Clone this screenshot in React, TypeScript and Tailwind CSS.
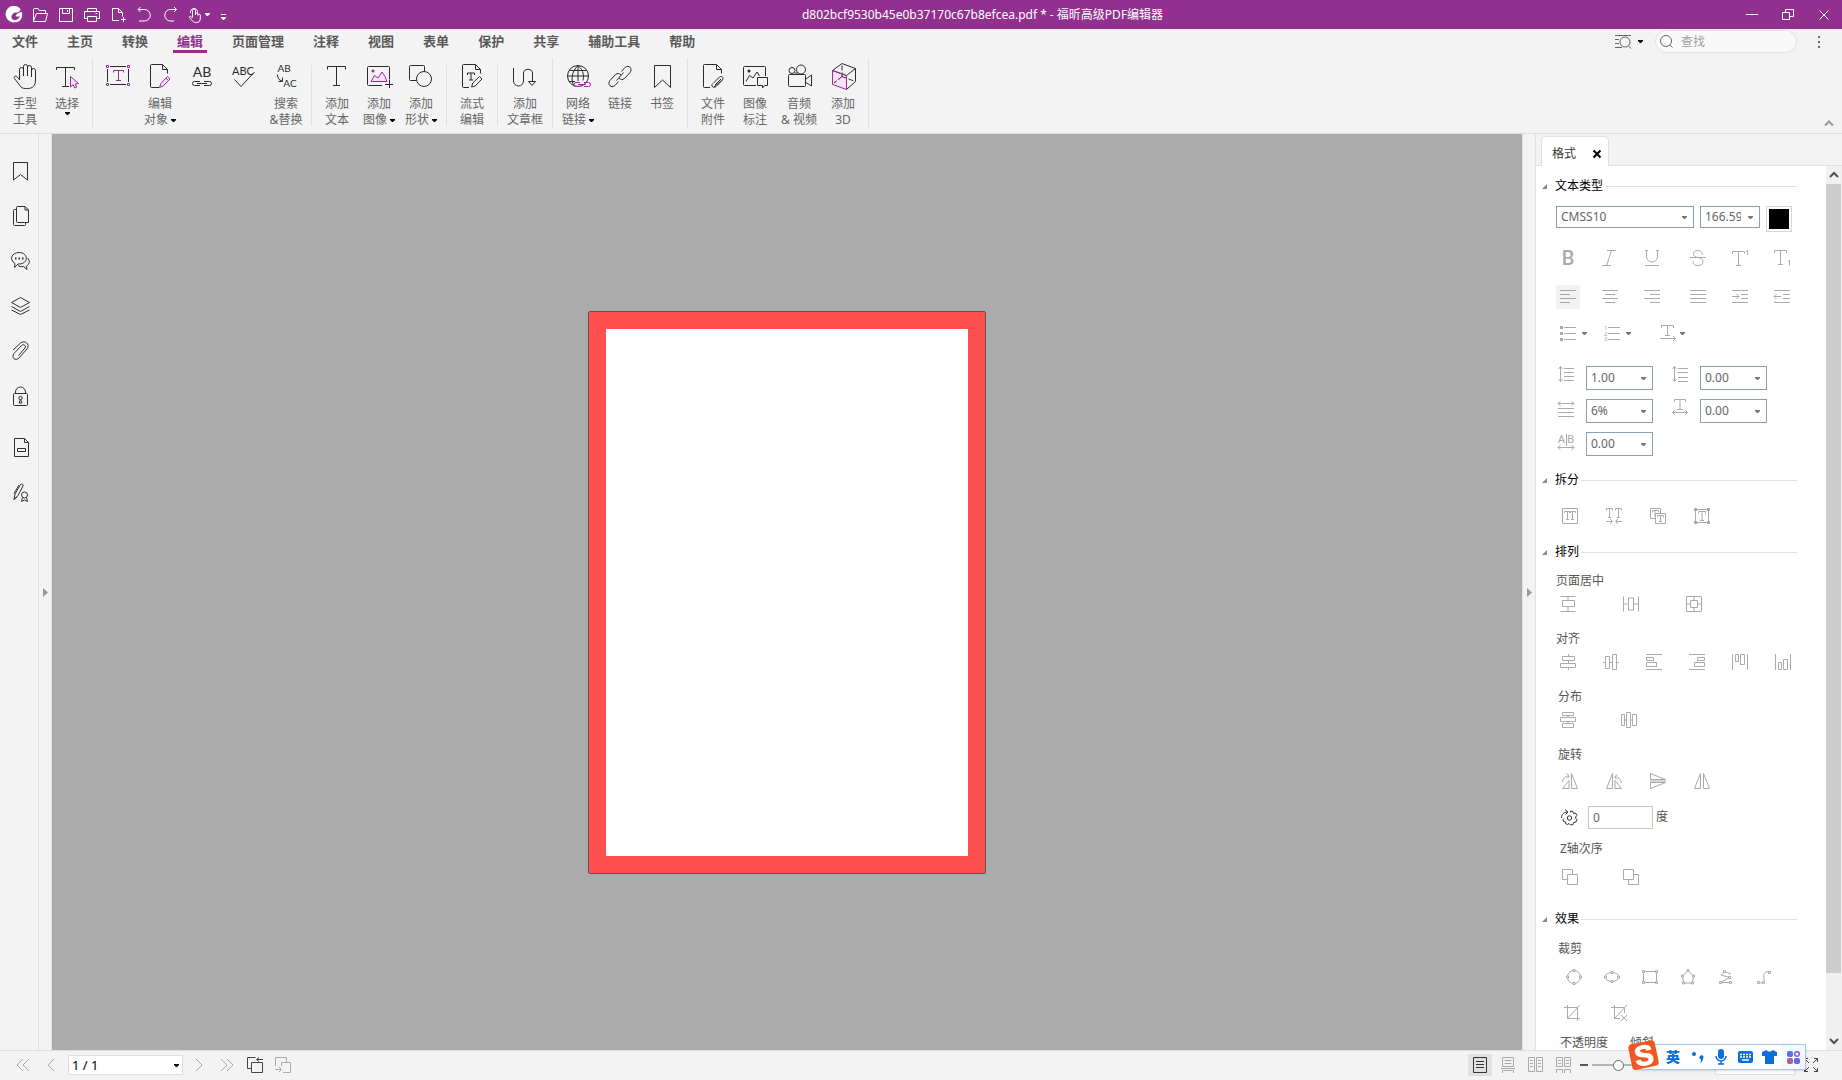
import React from 'react';

type Kids = { children?: React.ReactNode };

function Svg({ w = 16, h = 16, children, sw = 1 }: Kids & { w?: number; h?: number; sw?: number }) {
  return (
    <svg width={w} height={h} viewBox={`0 0 ${w} ${h}`} fill="none" stroke="currentColor" strokeWidth={sw} className="shrink-0 overflow-visible" aria-hidden="true">
      {children}
    </svg>
  );
}

const P = ({ d, w = 16, h = 16, sw = 1 }: { d: string; w?: number; h?: number; sw?: number }) => (
  <Svg w={w} h={h} sw={sw}>
    <path d={d} />
  </Svg>
);

const Caret = () => (
  <svg width="5" height="3" viewBox="0 0 5 3" fill="currentColor" className="shrink-0" aria-hidden="true">
    <path d="M0 0h5v1L3 3H2L0 1z" />
  </svg>
);

const PURPLE = '#923090';
const PINK = '#fbe0fb';

/* ---------- ribbon icons, 28 x 28 ---------- */

const R = ({ children }: Kids) => <Svg w={28} h={28}>{children}</Svg>;
const PageOutline = () => <path d="M11 24.5H5.5a1 1 0 0 1-1-1v-21a1 1 0 0 1 1-1h12l5 5v4M17.5 1.5v5h5" />;

const icons = {
  hand: (
    <R>
      <path d="M8.5 17V6.5a2 2 0 0 1 4 0V13M12.500 13V3.500a2 2 0 0 1 4 0V13M16.500 13V4.500a2 2 0 0 1 4 0V14M20.500 14V7.500a2 2 0 0 1 4 0V17c0 6-3 8.500-8 8.500h-2c-3 0-4.500-1-6-3.500l-5-6.500c-1.200-2 1-3.200 2.600-1.800l2.400 3" />
    </R>
  ),
  select: (
    <R>
      <path d="M3.500 7V4.500h18V7M12.500 4.500v19M9 23.500h7" />
      <path d="M17.500 13.500l8 7-3.300.6 1.500 3-2 .9-1.500-3.200-2.700 2z" fill={PINK} stroke={PURPLE} />
    </R>
  ),
  textBox: (
    <R>
      <path d="M6 3.500h16M6 21.500h16M3.500 6v13M24.500 6v13" />
      <path d="M2.500 2.500h2v2h-2zM23.500 2.500h2v2h-2zM2.500 20.500h2v2h-2zM23.500 20.500h2v2h-2zM9.500 9.500v-2h10v2M14.500 7.500v10M12 17.500h5" stroke={PURPLE} />
    </R>
  ),
  editObject: (
    <R>
      <path d="M13 24.500H5.500a1 1 0 0 1-1-1v-21a1 1 0 0 1 1-1h11l5 5v4M16.500 1.500v5h5" />
      <path d="M13.500 24.500l1.300-4 6.700-7 2.500 2.500-6.800 7zM20 15.200l2.500 2.500" fill={PINK} stroke={PURPLE} />
    </R>
  ),
  ab: (
    <R>
      <text x="14" y="14" textAnchor="middle" fontSize="14" fill="currentColor" stroke="none" fontFamily="Lato">AB</text>
      <path d="M12 18.500H6.500a2 2 0 0 0 0 4H12M16 18.500h5.500a2 2 0 0 1 0 4H16M9 20.500h10" />
    </R>
  ),
  abc: (
    <R>
      <text x="13" y="12" textAnchor="middle" fontSize="11" fill="currentColor" stroke="none" fontFamily="Lato">ABC</text>
      <path d="M4.500 16.500l6.500 7L24.500 9" />
    </R>
  ),
  replace: (
    <R>
      <text x="12" y="9" textAnchor="middle" fontSize="10" fill="currentColor" stroke="none" fontFamily="Lato">AB</text>
      <text x="18" y="24" textAnchor="middle" fontSize="10" fill="currentColor" stroke="none" fontFamily="Lato">AC</text>
      <path d="M5.500 11.500c0 4 1.500 5.500 4.500 6.500M10.500 14.500v4h-4" />
    </R>
  ),
  addText: (
    <R>
      <path d="M4.500 6.500v-3h18v3M13.500 3.500v19M10 22.500h7" />
    </R>
  ),
  addImage: (
    <R>
      <path d="M17 22.500H3.500a1 1 0 0 1-1-1v-17a1 1 0 0 1 1-1h20a1 1 0 0 1 1 1v12M24.500 17v8M20 21.500h8" />
      <path d="M6 18.500l3.500-6 3.500 2.500 4-6 3 4.500 2 5z" fill={PINK} stroke={PURPLE} />
      <circle cx="8" cy="8" r="1.500" fill={PURPLE} stroke="none" />
    </R>
  ),
  addShape: (
    <R>
      <path d="M9.500 17.500H3.500a1 1 0 0 1-1-1v-13a1 1 0 0 1 1-1h13a1 1 0 0 1 1 1V8" />
      <circle cx="17" cy="16" r="7.500" />
    </R>
  ),
  flowEdit: (
    <R>
      <PageOutline />
      <path d="M9.500 12v-2h7v2M13 10v7M11 17h4M13.500 24l1.300-4 6.700-6.500 2.500 2.500-6.800 7z" />
    </R>
  ),
  article: (
    <R>
      <path d="M2.500 5v13a5 5 0 0 0 10 0V9a5 5 0 0 1 9 0v9M17.500 18.500h7l-3.500 4z" />
    </R>
  ),
  webLink: (
    <R>
      <circle cx="14" cy="13" r="10.500" />
      <path d="M14 2.500C7 9 7 18 10 22.500M14 2.500c6 5 6 11 5 15M14 2.500V18M5.500 7.500h17M3.500 13h21M5 18.500h6" />
      <path d="M16 19.500h-4a2 2 0 0 0 0 4h4M20 19.500h4.500a2 2 0 0 1 0 4H20M14 21.500h8" stroke={PURPLE} />
    </R>
  ),
  link: (
    <R>
      <path d="M15.500 8.500l3.500-4c4-3.500 8 1.500 5 5l-5.500 6c-2 1.500-4 1.300-5.500-.5M12.500 18.500l-3.500 4c-4 3.500-8-1.500-5-5l5.500-6c2-1.500 4-1.300 5.500.5M10.500 17.500l7-8" />
    </R>
  ),
  bookmark: (
    <R>
      <path d="M6.500 2.500h16v22l-8-7.500-8 7.500z" />
    </R>
  ),
  fileAttach: (
    <R>
      <PageOutline />
      <path d="M14.500 20l6-6c2-1.500 4.500.5 3 3l-6.500 6.500c-2.500 2-5.500-.5-3.500-3M16 22l6-6M15 24l7.500-6.500" />
    </R>
  ),
  imageNote: (
    <R>
      <path d="M15 22.500H3.500a1 1 0 0 1-1-1v-17a1 1 0 0 1 1-1h20a1 1 0 0 1 1 1V13M5 18.500l3.500-6 3.500 2.500 4-6 2.500 4M16.500 14.500h10v8h-3l-2 2.500v-2.500h-5z" />
      <circle cx="8" cy="8" r="1.500" fill="currentColor" stroke="none" />
    </R>
  ),
  media: (
    <R>
      <rect x="3.500" y="11.500" width="17" height="12" rx="1" />
      <circle cx="7" cy="7.500" r="3" />
      <circle cx="16" cy="6.500" r="4.500" />
      <path d="M10 10h3M21 16l5.500-4v11L21 19.500" />
    </R>
  ),
  cube: (
    <R>
      <path d="M3 8l14 4.500V26L3 21z" fill={PINK} stroke="none" />
      <path d="M3.500 7.500L13 .5l13.500 5-9 7zM26.500 5.500v13L17.500 26.500" />
      <path d="M13 2.500v11M13 13.500l-8 6.500M13 13.500l12 4.500" strokeDasharray="5 2" />
      <path d="M3.500 7.500l14 5v14l-14-5z" stroke={PURPLE} />
    </R>
  ),
};

type Tool = { icon: React.ReactNode; a?: string; b?: string; caret?: boolean; wide?: boolean; name?: string };
type Group = { tools: Tool[]; tall?: boolean };

const ribbon: Group[] = [
  { tall: true, tools: [{ icon: icons.hand, a: '手型', b: '工具' }, { icon: icons.select, a: '选择', caret: true }] },
  {
    tools: [
      { icon: icons.textBox, name: '编辑文本' },
      { icon: icons.editObject, a: '编辑', b: '对象', caret: true },
      { icon: icons.ab, name: '链接文本块' },
      { icon: icons.abc, name: '拼写检查' },
      { icon: icons.replace, a: '搜索', b: '&替换' },
    ],
  },
  {
    tools: [
      { icon: icons.addText, a: '添加', b: '文本' },
      { icon: icons.addImage, a: '添加', b: '图像', caret: true },
      { icon: icons.addShape, a: '添加', b: '形状', caret: true },
    ],
  },
  { tools: [{ icon: icons.flowEdit, a: '流式', b: '编辑' }] },
  { tall: true, tools: [{ icon: icons.article, a: '添加', b: '文章框', wide: true }] },
  {
    tall: true,
    tools: [
      { icon: icons.webLink, a: '网络', b: '链接', caret: true },
      { icon: icons.link, a: '链接' },
      { icon: icons.bookmark, a: '书签' },
    ],
  },
  {
    tall: true,
    tools: [
      { icon: icons.fileAttach, a: '文件', b: '附件' },
      { icon: icons.imageNote, a: '图像', b: '标注' },
      { icon: icons.media, a: '音频', b: '& 视频', wide: true },
      { icon: icons.cube, a: '添加', b: '3D' },
    ],
  },
];

function TitleBar() {
  const quick: [string, React.ReactNode][] = [
    ['打开', <P d="M1.500 13V2.500a1 1 0 0 1 1-1H6l1.500 2h6v3M1.500 14l3-7.500h11L13.500 14.500h-12z" />],
    ['保存', <P d="M1.500 1.500h13v13h-13zM4.500 1.500v5h7v-5M9.500 3v2" />],
    ['打印', <P d="M3.500 4.500v-3h9v3M3.500 11.500h-3v-7h15v7h-3M3.500 9.500h9v5h-9zM11.500 6.500h2" />],
    ['新建', <P d="M9 13.500H2.500v-12h6l4 4v4M8.500 1.500v4h4M13.500 10v5M11 12.500h5" />],
    ['撤销', <P d="M2.500 2.500h6a5.500 5.500 0 0 1 0 11.500H3M4.500 0L2 2.500 4.500 5" />],
    ['重做', <P d="M14.500 2.500h-6a5.500 5.500 0 0 0 0 11.500H12M12 0l2.500 2.500L12 5" />],
  ];
  return (
    <div className="flex h-[29px] shrink-0 items-center bg-[#923090] text-white">
      <div className="ml-[5px] mr-1 flex w-[18px]">
        <svg width="18" height="18" viewBox="0 0 18 18" aria-hidden="true">
          <path d="M15.500 3A8.300 8.300 0 1 0 17 10l-3 1.500c-1 2-2.500 2.500-4.500 2.500-2 0-3.300-1.500-3-3.500C7 8 9 6 12 6.500 14 6 15.500 5 15.500 3z" fill="white" />
          <path d="M17 6c-3 .5-5 1-6.500 4 1.500 1 3.500.5 4 0 .5 3-2 5.500-4.500 6.500 4.500 0 8-4 7-10.500z" fill="white" />
        </svg>
      </div>
      {quick.map(([n, i]) => (
        <button key={n} aria-label={n} className="flex h-6 w-[26px] items-center justify-center">{i}</button>
      ))}
      <button aria-label="触摸模式" className="flex h-6 w-8 items-center gap-0.5 pl-1">
        <P d="M5.500 10V3.500a1.500 1.500 0 0 1 3 0V8M8.500 7a1.300 1.300 0 0 1 2.500 0v1.500M11 8a1.200 1.200 0 0 1 2.300 0V11c0 3-1 4.500-4 4.500S6 14.500 2.500 10.500C2 9 3.500 8.500 5.500 11M3.500 6a3.600 3.600 0 1 1 7 0" />
        <Caret />
      </button>
      <button aria-label="自定义快速访问工具栏" className="flex h-6 w-4 flex-col items-center justify-center gap-[2px] pt-1">
        <span className="h-px w-[5px] bg-white" />
        <Caret />
      </button>
      <h1 className="flex-1 text-center text-[12px] leading-4">d802bcf9530b45e0b37170c67b8efcea.pdf * - 福昕高级PDF编辑器</h1>
      <button aria-label="最小化" className="flex h-7 w-9 items-center justify-center"><P w={12} h={12} d="M0 5.500h12" /></button>
      <button aria-label="还原" className="flex h-7 w-9 items-center justify-center"><P w={12} h={12} d="M.5 3.500h7v7h-7zM3.500 3V.5h8v7H8" /></button>
      <button aria-label="关闭" className="flex h-7 w-9 items-center justify-center"><P w={10} h={10} d="M.5.5l9 9M9.500.5l-9 9" /></button>
    </div>
  );
}

function MenuBar() {
  const menus = ['文件', '主页', '转换', '编辑', '页面管理', '注释', '视图', '表单', '保护', '共享', '辅助工具', '帮助'];
  return (
    <nav className="flex h-[29px] shrink-0 items-start pl-2">
      <div className="flex gap-[21px]">
        {menus.map((m) => (
          <button
            key={m}
            className={
              m === '编辑'
                ? 'h-6 border-b-[3px] border-[#923090] px-1 pt-1 text-[13px] font-bold leading-[17px] text-[#923090]'
                : 'h-6 border-b-[3px] border-transparent px-1 pt-1 text-[13px] font-bold leading-[17px] text-[#595959]'
            }
          >
            {m}
          </button>
        ))}
      </div>
      <div className="ml-auto flex items-center pr-[15px] pt-px">
        <button aria-label="查找选项" className="mr-3 flex items-center gap-[7px] text-[#666]">
          <Svg>
            <path d="M0 1.500h16M0 5.500h4M0 9.500h4M0 13.500h7M13.500 12l2.500 2.500" />
            <circle cx="10" cy="8" r="5" />
          </Svg>
          <span className="text-black"><Caret /></span>
        </button>
        <label className="flex h-[23px] w-[142px] items-center rounded-full border border-[#e1e1e1] bg-[#f9f9f9] pl-1 text-[#666]">
          <Svg w={13} h={13}>
            <circle cx="6" cy="6" r="5.500" />
            <path d="M10 10l2.500 2.500" />
          </Svg>
          <input aria-label="查找" placeholder="查找" className="ml-2 w-24 bg-transparent text-[12px] outline-none placeholder:text-[#a0a0a0]" />
        </label>
        <button aria-label="更多" className="ml-[14px] flex w-4 flex-col items-center gap-[3px]">
          <span className="size-[2px] bg-[#666]" />
          <span className="size-[2px] bg-[#666]" />
          <span className="size-[2px] bg-[#666]" />
        </button>
      </div>
    </nav>
  );
}

function Ribbon() {
  return (
    <div className="flex h-[76px] shrink-0 border-b border-[#dedede]">
      {ribbon.map((g, gi) => (
        <div key={gi} className="flex shrink-0">
          <div className="flex px-1">
            {g.tools.map((t, i) => (
              <button key={i} aria-label={t.name} className={t.wide ? 'flex w-[46px] flex-col items-center pt-[5px]' : 'flex w-[42px] flex-col items-center pt-[5px]'}>
                <span className="mb-[5px] text-[#2b2b2b]">{t.icon}</span>
                {t.a && <span className="whitespace-nowrap text-[12px] leading-4 text-[#666]">{t.a}</span>}
                {(t.b || t.caret) && (
                  <span className="flex items-center gap-[3px] whitespace-nowrap text-[12px] leading-4 text-[#666]">
                    {t.b}
                    {t.caret && <span className="text-black"><Caret /></span>}
                  </span>
                )}
              </button>
            ))}
          </div>
          <span className={g.tall ? 'h-[70px] w-px bg-[#e1e1e1]' : 'mt-[7px] h-[61px] w-px bg-[#e1e1e1]'} />
        </div>
      ))}
      <button aria-label="折叠功能区" className="mb-1.5 ml-auto mr-2 self-end text-[#999]">
        <P w={10} h={8} sw={2} d="M1 6.500l4-4 4 4" />
      </button>
    </div>
  );
}

function LeftRail() {
  const items: [string, React.ReactNode][] = [
    ['书签', <P w={20} h={20} d="M3.500 1.500h14v17.500l-7-5.500-7 5.500z" />],
    ['页面', <P w={20} h={20} d="M14.500 16.500h-7a1 1 0 0 1-1-1v-14a1 1 0 0 1 1-1h7.500l3.500 3.500v12.500h-4M15 .5v3.500h3.500M6.500 3.500h-2a1 1 0 0 0-1 1v14a1 1 0 0 0 1 1h10a1 1 0 0 0 1-1v-2" />],
    ['注释', <Svg w={20} h={20}><path d="M4.500 16.500l.5-4C-1.500 8.500 2 1.500 9 1.500c9.500 0 10 11.500 0 11.500H8zM17.500 7c3 3 2 6-1 8l.5 3.500-3.500-3c-2 .5-4.500 0-5.500-1" /><path d="M5 7.500h1.500M8.500 7.500H10M12 7.500h1.500" strokeWidth="2" /></Svg>],
    ['图层', <P w={20} h={20} d="M1.500 6.500l9-5 9 5-9 5zM1.500 10.500l9 5 9-5M1.500 14l9 4.500 9-4.500" />],
    ['附件', <P w={20} h={20} d="M3 9l7.500-7c4.500-3.500 10 1.500 6.500 6l-8 9c-4 3.500-8-.5-5-4.500l7.500-8c2.500-2 5 .5 3.500 2.500l-6.500 7.500" />],
    ['安全', <Svg w={20} h={20}><rect x="3.500" y="7.500" width="14" height="12" rx="1" /><path d="M5.500 7.500V6a5 5 0 0 1 10 0v1.500M10.500 13.500l-1.500 3.500h3z" /><circle cx="10.500" cy="12" r="1.700" /></Svg>],
    ['域', <P w={20} h={20} d="M4.500 1.500h10l4 4v14h-14zM14.500 1.500v4h4M7.500 11.500h8v3h-8z" />],
    ['数字签名', <Svg w={20} h={20}><path d="M4 17.500l1-5.500 5.500-9.500c1.500-1 3 0 2.500 1.500L8 13.500zM9 3l-5 8.500M7 15l-3 2.500M12.500 15.500l-1 4 3-1.500 3 1.500-1-4" /><circle cx="14.500" cy="13" r="3" /></Svg>],
  ];
  return (
    <aside className="flex w-[39px] shrink-0 flex-col gap-[21px] border-r border-[#e1e1e1] pl-2 pt-[25px] text-[#2f2f2f]">
      {items.map(([n, i]) => (
        <button key={n} aria-label={n} className={n === '域' ? 'mt-1.5 flex size-6 items-center justify-center' : 'flex size-6 items-center justify-center'}>{i}</button>
      ))}
    </aside>
  );
}

const Gutter = ({ name, right }: { name: string; right?: boolean }) => (
  <button
    aria-label={name}
    className={
      right
        ? 'flex w-[14px] shrink-0 items-center justify-center border-x border-[#e1e1e1] text-[#999]'
        : 'flex w-[13px] shrink-0 items-center justify-center border-r border-[#e1e1e1] text-[#999]'
    }
  >
    <svg width="5" height="9" viewBox="0 0 5 9" fill="currentColor" aria-hidden="true"><path d="M0 0l5 4.500L0 9z" /></svg>
  </button>
);

/* ---------- format panel ---------- */

function Heading({ children }: Kids) {
  return (
    <h2 className="flex h-6 items-center text-[12px] leading-4 text-black">
      <svg width="5" height="5" viewBox="0 0 5 5" className="mr-2" aria-hidden="true"><path d="M5 0v5H0z" fill="#888" /></svg>
      {children}
      <span className="ml-0.5 h-px flex-1 bg-[#e1e1e1]" />
    </h2>
  );
}

const Label = ({ children }: Kids) => <h3 className="text-[12px] leading-4 text-[#555]">{children}</h3>;

const B = ({ name, children, on }: Kids & { name: string; on?: boolean }) => (
  <button aria-label={name} className={on ? 'flex size-6 shrink-0 items-center justify-center bg-[#f3f3f3]' : 'flex size-6 shrink-0 items-center justify-center'}>{children}</button>
);

function Combo({ name, value, kind }: { name: string; value: string; kind: 'font' | 'size' | 'num' }) {
  const cls = {
    font: 'h-[22px] w-[138px]',
    size: 'h-[22px] w-[60px]',
    num: 'h-6 w-[67px]',
  }[kind];
  return (
    <span className={`relative flex shrink-0 ${cls}`}>
      <select aria-label={name} defaultValue={value} className="size-full appearance-none overflow-hidden border border-[#86a0b4] bg-white pl-1 pr-[18px] text-[12px] leading-4 text-[#666]">
        <option>{value}</option>
      </select>
      <span className="pointer-events-none absolute inset-y-0 right-[7px] flex items-center text-[#777]"><Caret /></span>
    </span>
  );
}

function FormatPanel() {
  return (
    <section className="flex w-[306px] shrink-0 flex-col bg-[#f3f3f3]">
      <div className="flex h-8 shrink-0 items-end border-b border-[#e1e1e1] pl-[5px]">
        <div className="-mb-px flex h-[30px] w-[68px] items-center gap-[17px] rounded-t-[5px] border border-b-0 border-[#e1e1e1] bg-white pl-2.5 pt-1 text-[12px] text-[#333]">
          格式
          <button aria-label="关闭面板" className="text-black"><P w={8} h={8} sw={2} d="M.5.5l7 7M7.500.5l-7 7" /></button>
        </div>
      </div>
      <div className="flex min-h-0 flex-1 bg-white">
        <div className="min-w-0 flex-1 overflow-hidden pl-1.5 pr-[29px] pt-2">
          <Heading>文本类型</Heading>
          <div className="ml-3.5 mt-2 flex h-[26px] items-start gap-1.5">
            <Combo kind="font" name="字体" value="CMSS10" />
            <Combo kind="size" name="字号" value="166.59" />
            <button aria-label="字体颜色" className="size-[26px] border border-[#d5d5d5] p-0.5"><span className="block size-5 bg-black" /></button>
          </div>

          <div className="ml-3.5 mt-3.5 flex gap-[18px] text-[#aaa]">
            <B name="粗体"><Svg><text x="8" y="15" textAnchor="middle" fontSize="20" fontWeight="500" fill="currentColor" stroke="none" fontFamily="Roboto">B</text></Svg></B>
            <B name="斜体"><P d="M5 .5h9M0 15.500h9M9.500.5l-5 15" /></B>
            <B name="下划线"><P d="M2.500 0v6.500a5.500 5.500 0 0 0 11 0V0M1 15.500h14M1 .5h3M12 .5h3" /></B>
            <span className="ml-1 flex"><B name="删除线"><P d="M12.500 4.500C12 1.500 10 .5 8 .5 5 .5 3.500 2 3.500 4S5 7 8 7.500s5 1.500 5 4-2 4-5 4-5-1-5-4.500M0 7.500h16" /></B></span>
            <B name="上标"><P d="M.5 4V1.500h12V4M6.500 1.500v14M4 15.500h5M14 1.500l1.500-1v4.500" /></B>
            <B name="下标"><P d="M.5 3V.5h12V3M6.500.5v14M4 14.500h5M14 11.500l1.500-1v5" /></B>
          </div>

          <div className="ml-3.5 mt-[15px] flex gap-[18px] text-[#aaa]">
            <B name="左对齐" on><P d="M0 1.500h16M0 5.500h10M0 9.500h16M0 13.500h10" /></B>
            <B name="居中"><P d="M0 1.500h16M3 5.500h10M0 9.500h16M3 13.500h10" /></B>
            <B name="右对齐"><P d="M0 1.500h16M6 5.500h10M0 9.500h16M6 13.500h10" /></B>
            <span className="ml-1 flex"><B name="两端对齐"><P d="M0 1.500h16M0 5.500h16M0 9.500h16M0 13.500h16" /></B></span>
            <B name="增加缩进"><P d="M0 1.500h16M9 5.500h7M9 9.500h7M0 13.500h16M0 7.500h7M4.500 5L7 7.500 4.500 10" /></B>
            <B name="减少缩进"><P d="M0 1.500h16M9 5.500h7M9 9.500h7M0 13.500h16M7 7.500H0M2.500 5L0 7.500 2.500 10" /></B>
          </div>

          <div className="ml-[18px] mt-3 flex h-6 items-center text-[#aaa]">
            <button aria-label="项目符号" className="mr-[17px] flex items-center gap-1.5"><Svg><path d="M4 2.500h12M4 8.500h12M4 14.500h12" /><path d="M0 2.500h3M0 8.500h3M0 14.500h3" strokeWidth="3" /></Svg><span className="text-[#777]"><Caret /></span></button>
            <button aria-label="编号" className="mr-[29px] flex items-center gap-1.5">
              <Svg>
                <path d="M4 2.500h12M4 8.500h12M4 14.500h12" />
                <g fill="currentColor" stroke="none" fontSize="6" fontFamily="Noto Sans"><text x="0" y="5">1</text><text x="0" y="11">2</text><text x="0" y="16">3</text></g>
              </Svg>
              <span className="text-[#777]"><Caret /></span>
            </button>
            <button aria-label="文字方向" className="flex items-center gap-1"><P d="M1.500 3V.5h12V3M7.500.5v10M5 10.500h5M0 13.500h15M13 11l2.500 2.500L13 16" /><span className="text-[#777]"><Caret /></span></button>
          </div>

          <div className="ml-4 mt-[21px] flex flex-col gap-[9px] text-[#aaa]">
            <div className="flex items-start">
              <P d="M2.500.5v15M.5 3l2-2.500 2 2.500M.5 13l2 2.500 2-2.500M6 2.500h10M6 6.500h10M6 10.500h10M6 14.500h10" />
              <span className="ml-3 flex"><Combo kind="num" name="行距" value="1.00" /></span>
              <span className="ml-[19px] flex"><P d="M2.500.5v15M.5 3l2-2.500 2 2.500M.5 13l2 2.500 2-2.500M6 2.500h10M6 6.500h10M6 11.500h10M6 15.500h10" /></span>
              <span className="ml-3 flex"><Combo kind="num" name="段落间距" value="0.00" /></span>
            </div>
            <div className="flex items-start">
              <P h={20} d="M0 4.500h16M2.500 2L0 4.500 2.500 7M13.500 2L16 4.500 13.500 7M0 9.500h16M0 13.500h16M0 17.500h16" />
              <span className="ml-3 flex"><Combo kind="num" name="水平缩放" value="6%" /></span>
              <span className="ml-[19px] flex"><P d="M2.500 3V.5h11V3M8 .5v10M5 10.500h6M.5 13.500h15M3 11L.5 13.500 3 16M13 11l2.500 2.500L13 16" /></span>
              <span className="ml-3 flex"><Combo kind="num" name="字间距" value="0.00" /></span>
            </div>
            <div className="flex items-start">
              <Svg h={20}>
                <text x="0" y="11" fontSize="11" fill="currentColor" stroke="none" fontFamily="Noto Sans">A</text>
                <text x="9" y="11" fontSize="11" fill="currentColor" stroke="none" fontFamily="Noto Sans">B</text>
                <path d="M8.500 2v12M0 15.500h16M2.500 13L0 15.500 2.500 18M13.500 13l2.500 2.500-2.500 2.500" />
              </Svg>
              <span className="ml-3 flex"><Combo kind="num" name="字符间距" value="0.00" /></span>
            </div>
          </div>

          <div className="mt-3"><Heading>拆分</Heading></div>
          <div className="ml-4 mt-3 flex gap-5 text-[#aaa]">
            <B name="拆分文本"><P d="M.5.5h15v15H.5zM2.500 5V3.500h5V5M5.500 3.500v8M4 11.500h3M8.500 5V3.500h5V5M10.500 3.500v8M9 11.500h3" /></B>
            <B name="合并文本"><P d="M.5 2.500v-2h6v2M3.500.5v9M2 9.500h3M9.500 2.500v-2h6v2M12.500.5v9M11 9.500h3M0 13.500h6M4 11l2.500 2.500L4 16M16 13.500h-6M12 11l-2.500 2.500L12 16" /></B>
            <B name="关联文本"><P d="M5.500 10.500h-5v-10h10v5M5.500 5.500h10v10h-10zM2.500 4.500v-2h6v2M5 2.500v6M7.500 9V7.500h6V9M10.500 7.500v6M9 13.500h3" /></B>
            <B name="文本框"><Svg><path d="M1.500 1.500h13v13h-13zM4.500 5.500v-2h7v2M8 3.500v9M6 12.500h4" /><path d="M0 1.500h3M13 1.500h3M0 14.500h3M13 14.500h3" strokeWidth="3" /></Svg></B>
          </div>

          <div className="mt-3"><Heading>排列</Heading></div>
          <div className="ml-3.5 mt-[9px]"><Label>页面居中</Label></div>
          <div className="ml-3.5 mt-[3px] flex gap-[39px] text-[#aaa]">
            <B name="垂直居中"><P d="M.5.5h15M.5 15.500h15M8 .5v4M8 11v4.500M2.500 4.500h12v6h-12z" /></B>
            <B name="水平居中"><P d="M.5.5v15M15.500.5v15M.5 8h4M11 8h4.500M5.500 2h5v12h-5z" /></B>
            <B name="页面居中"><P d="M.5.5h15v15H.5zM4.500 4.500h7v7h-7zM8 .5v4M8 11.500v4M.5 8h4M11.500 8h4" /></B>
          </div>
          <div className="ml-3.5 mt-[15px]"><Label>对齐</Label></div>
          <div className="ml-3.5 mt-[3px] flex gap-[19px] text-[#aaa]">
            <B name="垂直对齐"><P d="M2.500 2.500h12v4h-12zM.5 9.500h15v4H.5zM8.500 0v2.500M8.500 6.500v3M8.500 13.500V16" /></B>
            <B name="水平对齐"><P d="M2.500 2.500h4v12h-4zM9.500.5h4v15h-4zM0 8.500h2.500M6.500 8.500h3M13.500 8.500H16" /></B>
            <B name="左边对齐"><P d="M0 .5h16M0 15.500h16M.5 3.500h7v3h-7zM.5 8.500h10v4H.5z" /></B>
            <B name="右边对齐"><P d="M0 .5h16M0 15.500h16M8.500 3.500h7v3h-7zM5.500 8.500h10v4h-10z" /></B>
            <B name="顶端对齐"><P d="M.5 0v16M15.500 0v16M3.500.5h3v7h-3zM8.500.5h4v10h-4z" /></B>
            <B name="底端对齐"><P d="M.5 0v16M15.500 0v16M3.500 8.500h3v7h-3zM8.500 5.500h4v10h-4z" /></B>
          </div>
          <div className="ml-4 mt-[15px]"><Label>分布</Label></div>
          <div className="ml-3.5 mt-[3px] flex gap-[37px] text-[#aaa]">
            <B name="垂直分布"><P d="M2.500.5h11v3h-11zM.5 5.500h15v4H.5zM2.500 11.500h11v4h-11zM8 3.500v2M8 9.500v2" /></B>
            <B name="水平分布"><P d="M.5 2.500h3v11h-3zM5.500.5h4v15h-4zM11.500 2.500h4v11h-4zM3.500 8h2M9.500 8h2" /></B>
          </div>
          <div className="ml-4 mt-[15px]"><Label>旋转</Label></div>
          <div className="ml-4 mt-1.5 flex gap-5 text-[#aaa]">
            <B name="向左旋转"><P d="M9.500.5v15h6zM.5 15.500h6.500V7.500zM.5 9C1 5 3.500 3 7 3M4.500.500L7.500 3 5 5.500" /></B>
            <B name="向右旋转"><P d="M6.500.5v15h-6zM15.500 15.500H9V7.500zM15.500 10C15 6 12.500 4 9 4M11.500 1.500L8.500 4 11 6.500" /></B>
            <B name="垂直翻转"><P d="M.5.5v6h15zM.5 15.500v-6h15zM0 8h16" /></B>
            <B name="水平翻转"><P d="M6.500.5v15h-6zM9.500.5v15h6z" /></B>
          </div>
          <div className="ml-[19px] mt-3 flex h-6 items-center">
            <span className="text-[#333]">
              <Svg>
                <circle cx="8.500" cy="9" r="2.200" />
                <path d="M.5 9C.5 5.500 3 3 6 3M4 .5L7 3 4.500 5.500M9.500 3.500V2l2.500.5.5 2 2-.5 1.500 2.500-1.500 1.500.5 1.500 1 1-1 2.500-2.500.5-.5 2-2.500.5-1.500-1.500-1.500 1-2-1V13l-2-.5-.5-2L3 9.500" />
              </Svg>
            </span>
            <label className="ml-[11px] flex items-center text-[12px] text-[#555]">
              <input aria-label="旋转角度" defaultValue="0" className="mr-[3px] h-[23px] w-[65px] border border-[#c8c8c8] bg-white px-1 text-[12px] text-[#666]" />
              度
            </label>
          </div>
          <div className="ml-[18px] mt-3"><Label>Z轴次序</Label></div>
          <div className="ml-4 mt-2 flex gap-[37px] text-[#aaa]">
            <B name="上移一层"><P d="M5 10.500H.5V.5h10V5M5.500 5.500h10v10h-10z" /></B>
            <B name="下移一层"><P d="M.5.5h10v10H.5zM10.500 5.500h5v10h-10v-5" /></B>
          </div>

          <div className="mt-[18px]"><Heading>效果</Heading></div>
          <div className="ml-4 mt-2.5"><Label>裁剪</Label></div>
          <div className="ml-5 mt-2 flex gap-3.5 text-[#aaa]">
            <B name="圆形裁剪"><Svg><circle cx="8" cy="8" r="6.500" /><path d="M7 .5h2v2H7zM7 13.500h2v2H7zM.5 7h2v2h-2zM13.500 7h2v2h-2z" fill="white" /></Svg></B>
            <B name="椭圆裁剪"><Svg><ellipse cx="8" cy="8" rx="7" ry="4.500" /><path d="M7 2.500h2v2H7zM7 11.500h2v2H7zM.5 7h2v2h-2zM13.500 7h2v2h-2z" fill="white" /></Svg></B>
            <B name="矩形裁剪"><Svg><path d="M1.500 2.500h13v11h-13z" /><path d="M.5 1.500h2v2h-2zM13.500 1.500h2v2h-2zM.5 12.500h2v2h-2zM13.500 12.500h2v2h-2z" fill="white" /></Svg></B>
            <B name="多边形裁剪"><Svg><path d="M8 2L2.500 7l1 7h9l1-7z" /><path d="M7 .5h2v2H7zM1.500 6h2v2h-2zM12.500 6h2v2h-2zM2.500 13h2v2h-2zM11.500 13h2v2h-2z" fill="white" /></Svg></B>
            <B name="折线裁剪"><Svg><path d="M13 5L6.500 2.500 3 6l8.500 2.500-9 5h9" /><path d="M5.500 1.500h2v2h-2zM10.500 7.500h2v2h-2zM1.500 12.500h2v2h-2zM11.500 12.500h2v2h-2z" fill="white" /></Svg></B>
            <B name="曲线裁剪"><Svg><path d="M2 13.500c4 1 7 0 6-4s0-7 5-7" /><path d="M1.500 12.500h2v2h-2zM6.500 12.500h2v2h-2zM12.500 2.500h2v2h-2z" fill="white" /></Svg></B>
          </div>
          <div className="ml-[18px] mt-3 flex gap-[23px] text-[#aaa]">
            <B name="裁剪"><P d="M3.500 0v13.500H16M0 2.500h13.500V16M3.500 13.500L16 0" /></B>
            <B name="清除裁剪"><P d="M3.500 0v13.500H9M0 2.500h13.500V8M3.500 13.500L16 0M10 10l6 6M16 10l-6 6" /></B>
          </div>
          <div className="ml-[18px] mt-2.5 flex gap-[22px]">
            <Label>不透明度</Label>
            <Label>倾斜</Label>
          </div>
        </div>
        <div className="flex w-4 shrink-0 flex-col bg-[#f0f0f0] text-[#505050]">
          <button aria-label="向上滚动" className="flex h-[18px] shrink-0 items-center justify-center"><P w={10} h={8} sw={2} d="M1 6l4-4 4 4" /></button>
          <div className="min-h-0 flex-1"><div className="h-[93%] w-[15px] bg-[#cdcdcd]" /></div>
          <button aria-label="向下滚动" className="flex h-[18px] shrink-0 items-center justify-center"><P w={10} h={8} sw={2} d="M1 2l4 4 4-4" /></button>
        </div>
      </div>
    </section>
  );
}

function StatusBar() {
  return (
    <footer className="flex h-[30px] shrink-0 items-center border-t border-[#dedede] pb-px text-[#aaa]">
      <div className="flex items-center gap-1 pl-[11px]">
        <B name="首页"><P w={14} h={14} d="M7 1L1 7l6 6M13 1L7 7l6 6" /></B>
        <B name="上一页"><P w={8} h={14} d="M7 1L1 7l6 6" /></B>
        <span className="relative ml-px flex h-5 w-[115px]">
          <select aria-label="页码" className="size-full appearance-none border border-[#dedede] bg-white pl-[3px] text-[13px] leading-4 text-black"><option>1 / 1</option></select>
          <span className="pointer-events-none absolute inset-y-0 right-1 flex items-center text-black"><Caret /></span>
        </span>
        <B name="下一页"><P w={8} h={14} d="M1 1l6 6-6 6" /></B>
        <B name="末页"><P w={14} h={14} d="M1 1l6 6-6 6M7 1l6 6-6 6" /></B>
        <span className="flex text-[#444]"><B name="上一视图"><P d="M4 11.500H.5V.5h8M4.500 5.500h11v10h-11zM16 2.500h-6M12 .5l-2.500 2 2.500 2" /></B></span>
        <B name="下一视图"><P d="M.5 9V.5h11V5M8 15.500h7.500v-10h-9V9M0 12.500h6M4 10l2.500 2.500L4 15" /></B>
      </div>
      <div className="ml-auto flex items-center pr-[23px]">
        <div className="flex items-center gap-1">
          <button aria-label="单页" className="flex h-[22px] w-6 items-center justify-center bg-[#e1e1e1] text-[#333]"><P w={14} h={16} d="M.5.5h13v15H.5zM3 4.500h8M3 7.500h8M3 10.500h8" /></button>
          <B name="连续"><P w={14} h={16} d="M1.500.5h11v9h-11zM3.500 3.500h7M3.500 6.500h7M0 11.500h14M1.500 16v-2.500h11V16" /></B>
          <B name="双页"><P d="M.5.5h6v14h-6zM8.500.5h6v14h-6zM2 3.500h3M2 6.500h3M2 9.500h3M10 3.500h3M10 6.500h3M10 9.500h3" /></B>
          <B name="双页连续"><P d="M.5.5h6v9h-6zM8.500.5h6v9h-6zM2 3.500h3M2 6.500h3M10 3.500h3M10 6.500h3M.5 16v-3.500h6V16M8.500 16v-3.500h6V16" /></B>
        </div>
        <button aria-label="缩小" className="flex w-4 justify-center text-[#555]"><P w={8} h={8} sw={2} d="M0 4h8" /></button>
        <input
          type="range"
          aria-label="缩放"
          defaultValue={23}
          className="h-3 w-[104px] appearance-none bg-[linear-gradient(#b5b5b5,#b5b5b5)] bg-[length:100%_2px] bg-center bg-no-repeat [&::-webkit-slider-thumb]:size-[11px] [&::-webkit-slider-thumb]:appearance-none [&::-webkit-slider-thumb]:rounded-full [&::-webkit-slider-thumb]:border [&::-webkit-slider-thumb]:border-[#666] [&::-webkit-slider-thumb]:bg-white"
        />
        <button aria-label="放大" className="flex w-4 justify-center text-[#555]"><P w={8} h={8} sw={2} d="M0 4h8M4 0v8" /></button>
        <input aria-label="缩放比例" className="ml-[3px] h-5 w-20 border border-[#dedede] bg-white text-[12px]" />
        <button aria-label="全屏" className="ml-2 w-4 text-[#444]"><P d="M6 6L1.500 1.500M1.500 5V1.500H5M10 6l4.500-4.500M11 1.500h3.500V5M6 10l-4.500 4.500M1.500 11v3.500H5M10 10l4.500 4.500M11 14.500h3.500V11" /></button>
      </div>
    </footer>
  );
}

function InputMethodBar() {
  return (
    <div className="absolute bottom-2.5 right-9 flex h-[26px] w-[171px] items-center border border-[#a9c4e8] bg-white text-[#0a6fd8] shadow-sm">
      <svg width="34" height="32" viewBox="0 0 34 32" className="absolute -left-[9px] -top-[6px] overflow-visible" aria-hidden="true">
        <rect x="3" y="3" width="27" height="26" rx="4" fill="#f4561f" transform="rotate(-12 17 16)" />
        <text x="17" y="26" textAnchor="middle" fontSize="28" fontWeight="700" fill="white" stroke="white" strokeWidth="1" fontFamily="Liberation Sans" transform="rotate(-10 17 16)">S</text>
      </svg>
      <button className="ml-[29px] w-4 text-[14px] font-black leading-4">英</button>
      <button aria-label="中英文标点" className="ml-[11px] w-3">
        <svg width="12" height="12" viewBox="0 0 12 12" fill="currentColor"><circle cx="2" cy="3" r="2" /><path d="M7.500 6a2 2 0 1 1 3.500 1.500c0 2-1 3.500-3 4.500 1-1.500 1-2.500 1-3.500a2 2 0 0 1-1.500-2.500z" /></svg>
      </button>
      <button aria-label="语音输入" className="ml-[11px] w-3">
        <svg width="12" height="16" viewBox="0 0 12 16"><rect x="3" y="0" width="6" height="10" rx="3" fill="currentColor" /><path d="M1 7a5 5 0 0 0 10 0M6 12v3M3 15h6" fill="none" stroke="currentColor" strokeWidth="1.500" /></svg>
      </button>
      <button aria-label="软键盘" className="ml-[11px] w-[15px]">
        <svg width="15" height="12" viewBox="0 0 15 12"><rect width="15" height="12" rx="2" fill="currentColor" /><path d="M2 3.500h11M2 6h11" stroke="white" strokeWidth="1.500" strokeDasharray="2 1" /><path d="M4 9h7" stroke="white" strokeWidth="1.500" /></svg>
      </button>
      <button aria-label="皮肤" className="ml-[9px] w-[15px]">
        <svg width="15" height="14" viewBox="0 0 15 14" fill="currentColor"><path d="M4.500 0c1 2 5 2 6 0L15 2v4h-3v8H3V6H0V2z" /></svg>
      </button>
      <button aria-label="工具箱" className="ml-auto flex h-full w-[23px] items-center justify-center bg-gradient-to-br from-cyan-50 to-fuchsia-50">
        <svg width="13" height="13" viewBox="0 0 13 13" fill="#5b6cf0"><rect width="6" height="6" rx="2" /><circle cx="10" cy="3" r="2.300" fill="none" stroke="#7a5cf0" strokeWidth="1.500" /><rect y="7" width="6" height="6" rx="2" fill="#b0608f" /><rect x="7" y="7" width="6" height="6" rx="2" /></svg>
      </button>
    </div>
  );
}

export default function App() {
  return (
    <div className="relative flex h-screen flex-col overflow-hidden bg-[#f3f3f3] font-['Noto_Sans','Noto_Sans_CJK_SC',sans-serif]">
      <TitleBar />
      <MenuBar />
      <Ribbon />
      <div className="flex min-h-0 flex-1">
        <LeftRail />
        <Gutter name="展开导航面板" />
        <main className="flex min-w-0 flex-1 items-center justify-center bg-[#ababab]">
          <div className="h-[563px] w-[398px] rounded-[2px] border border-[#555] bg-[#ff4f4f] p-[17px]">
            <div className="size-full bg-white" />
          </div>
        </main>
        <Gutter name="折叠格式面板" right />
        <FormatPanel />
      </div>
      <StatusBar />
      <InputMethodBar />
    </div>
  );
}
